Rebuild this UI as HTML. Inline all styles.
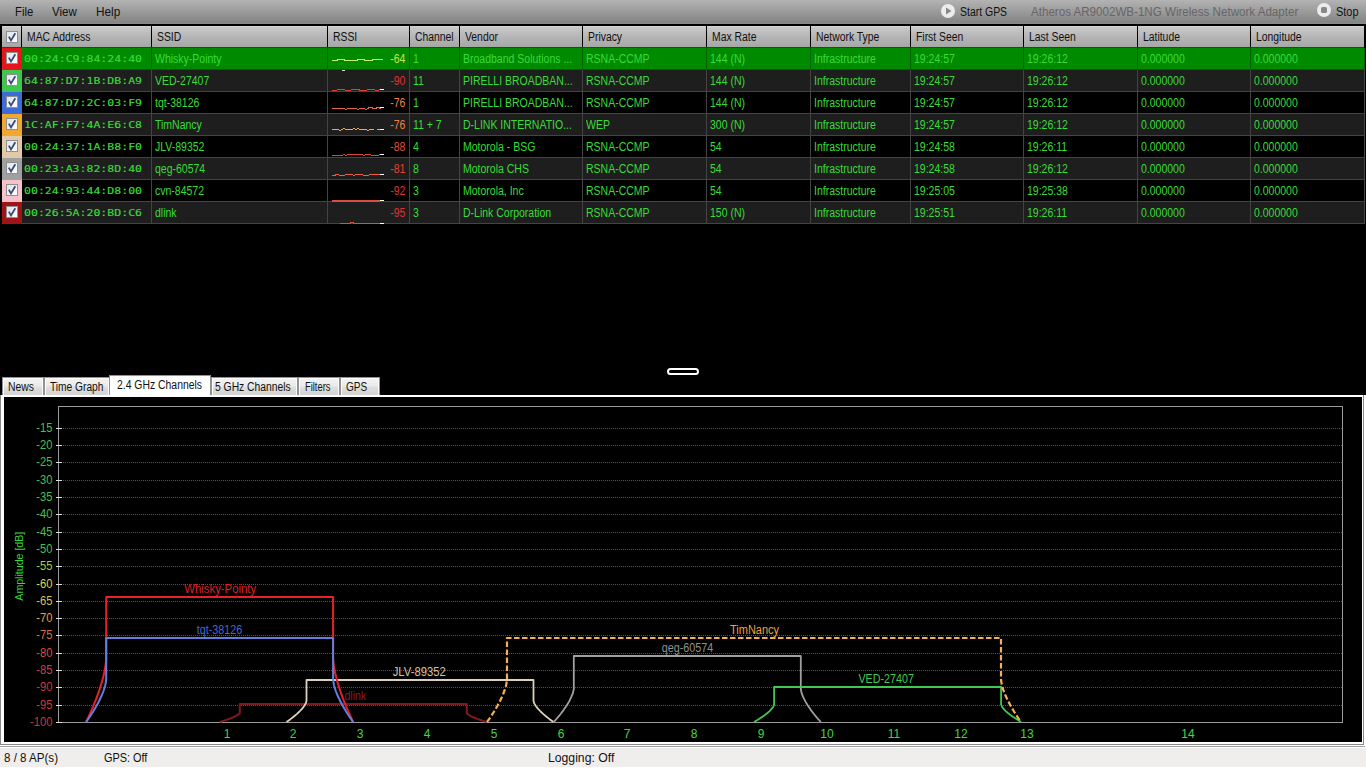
<!DOCTYPE html>
<html><head><meta charset="utf-8"><title>inSSIDer</title>
<style>
html,body{margin:0;padding:0;background:#000;}
body{width:1366px;height:768px;overflow:hidden;position:relative;font-family:"Liberation Sans",sans-serif;font-size:12px;}
.abs{position:absolute;}
#menubar{left:0;top:0;width:1366px;height:24px;background:linear-gradient(#b3b3b3,#868686 90%,#8b8b8b);}
#menubar span{position:absolute;top:5px;font-size:12.5px;color:#111;white-space:nowrap;transform-origin:0 50%;}
.hc{position:absolute;top:26px;height:21px;background:linear-gradient(#dcdcdc 0,#c9c9c9 1.5px,#b5b4b5 55%,#a5a8a5 100%);color:#111;line-height:23px;white-space:nowrap;overflow:hidden;}
.hc span{display:inline-block;margin-left:5px;transform:scaleX(.865);transform-origin:0 50%;}
.row{position:absolute;left:2px;width:1363px;height:22px;background:#444;}
.row.sel{background:#006400;}
.c{position:absolute;top:0;height:21px;line-height:23px;color:#38dc38;white-space:nowrap;overflow:hidden;}
.c span{display:inline-block;margin-left:3px;transform:scaleX(.875);transform-origin:0 50%;}
.mac span{font-family:"DejaVu Sans Mono","Liberation Mono",monospace;font-size:9.2px;transform:scaleX(1.255);margin-left:2px;position:relative;top:-1px;-webkit-text-stroke:.15px #38dc38;}
.cb{position:absolute;left:6px;top:5px;width:10px;height:10px;border:1px solid #8e8f8f;background:linear-gradient(135deg,#dfe3e8,#fff);}
.cb svg{position:absolute;left:0;top:0;}
.tab{position:absolute;top:377px;height:17px;line-height:18px;background:linear-gradient(#f3f3f3,#ebebeb 45%,#dedede 55%,#d4d4d4);border:1px solid #929292;border-bottom:none;box-shadow:inset 1px 1px 0 #fcfcfc,inset -1px 0 0 #fcfcfc;color:#111;text-align:center;white-space:nowrap;}
.tab span{position:absolute;top:0;transform-origin:0 50%;}
#status{left:0;top:747px;width:1366px;height:20px;background:#f0eded;color:#111;border-top:1px solid #fff;border-bottom:1px solid #fff;box-sizing:content-box;height:19px;}
#status span{position:absolute;top:3px;white-space:nowrap;transform-origin:0 50%;}
</style></head><body>

<div id="menubar" class="abs">
<span style="left:15px;color:#111;transform:scaleX(0.904)">File</span>
<span style="left:52px;color:#111;transform:scaleX(0.921)">View</span>
<span style="left:96.25px;color:#111;transform:scaleX(0.943)">Help</span>
<span style="left:959.7px;color:#111;transform:scaleX(0.837)">Start GPS</span>
<span style="left:1031.4px;color:#666;transform:scaleX(0.927)">Atheros AR9002WB-1NG Wireless Network Adapter</span>
<span style="left:1335.8px;color:#111;transform:scaleX(0.875)">Stop</span>
<svg class="abs" style="left:940px;top:3px" width="16" height="16"><circle cx="8" cy="8" r="7" fill="#ececec"/><path d="M6 4.5 L11.5 8 L6 11.5Z" fill="#888"/></svg>
<svg class="abs" style="left:1316px;top:2px" width="16" height="16"><circle cx="8" cy="8" r="7" fill="#ececec"/><rect x="5" y="5" width="6" height="6" rx="1.5" fill="#888"/></svg>
</div>
<div class="hc" style="left:2px;width:19px"><div class="cb" style="left:3.5px;top:4.5px"><svg width="10" height="10" viewBox="0 0 10 10"><path d="M1.8 4.6 L4 8.4 L8.3 1.2" fill="none" stroke="#3a4a78" stroke-width="1.8"/></svg></div></div>
<div class="hc" style="left:22px;width:129px"><span>MAC Address</span></div>
<div class="hc" style="left:152px;width:175px"><span>SSID</span></div>
<div class="hc" style="left:328px;width:81px"><span>RSSI</span></div>
<div class="hc" style="left:410px;width:49px"><span>Channel</span></div>
<div class="hc" style="left:460px;width:122px"><span>Vendor</span></div>
<div class="hc" style="left:583px;width:123px"><span>Privacy</span></div>
<div class="hc" style="left:707px;width:103px"><span>Max Rate</span></div>
<div class="hc" style="left:811px;width:99px"><span>Network Type</span></div>
<div class="hc" style="left:911px;width:112px"><span>First Seen</span></div>
<div class="hc" style="left:1024px;width:113px"><span>Last Seen</span></div>
<div class="hc" style="left:1138px;width:112px"><span>Latitude</span></div>
<div class="hc" style="left:1251px;width:113px"><span>Longitude</span></div>
<div class="row sel" style="top:48px">
<div class="abs" style="left:0;top:0;width:19.6px;height:22px;background:#e8141c"><div class="cb" style="left:3.5px;top:4.3px"><svg width="10" height="10" viewBox="0 0 10 10"><path d="M1.8 4.6 L4 8.4 L8.3 1.2" fill="none" stroke="#3a4a78" stroke-width="1.8"/></svg></div></div>
<div class="c mac" style="left:20px;width:129px;background:#008a00"><span>00:24:C9:84:24:40</span></div>
<div class="c" style="left:150px;width:175px;background:#008a00"><span>Whisky-Pointy</span></div>
<div class="c" style="left:326px;width:81px;background:#008a00;overflow:visible"><svg class="abs" style="left:0;top:0;overflow:visible" width="60" height="22"><path d="M4 12 L9 12 L10 11 L16 11 L17 12 L29 12 L30 11 L36 11 L37 12 L44 12 L45 11 L55 11" fill="none" stroke="#ccf060" stroke-width="1" transform="translate(0,.5)" shape-rendering="crispEdges"/></svg><span style="position:absolute;right:4px;top:0;margin:0;color:#c8e840;transform-origin:100% 50%">-64</span></div>
<div class="c" style="left:408px;width:49px;background:#008a00"><span>1</span></div>
<div class="c" style="left:458px;width:122px;background:#008a00"><span>Broadband Solutions ...</span></div>
<div class="c" style="left:581px;width:123px;background:#008a00"><span>RSNA-CCMP</span></div>
<div class="c" style="left:705px;width:103px;background:#008a00"><span>144 (N)</span></div>
<div class="c" style="left:809px;width:99px;background:#008a00"><span>Infrastructure</span></div>
<div class="c" style="left:909px;width:112px;background:#008a00"><span>19:24:57</span></div>
<div class="c" style="left:1022px;width:113px;background:#008a00"><span>19:26:12</span></div>
<div class="c" style="left:1136px;width:112px;background:#008a00"><span>0.000000</span></div>
<div class="c" style="left:1249px;width:113px;background:#008a00"><span>0.000000</span></div>
</div>
<div class="row" style="top:70px">
<div class="abs" style="left:0;top:0;width:19.6px;height:22px;background:#3cc84c"><div class="cb" style="left:3.5px;top:4.3px"><svg width="10" height="10" viewBox="0 0 10 10"><path d="M1.8 4.6 L4 8.4 L8.3 1.2" fill="none" stroke="#3a4a78" stroke-width="1.8"/></svg></div></div>
<div class="c mac" style="left:20px;width:129px;background:#1e1e1e"><span>64:87:D7:1B:DB:A9</span></div>
<div class="c" style="left:150px;width:175px;background:#1e1e1e"><span>VED-27407</span></div>
<div class="c" style="left:326px;width:81px;background:#1e1e1e;overflow:visible"><svg class="abs" style="left:0;top:0;overflow:visible" width="60" height="22"><path d="M4 20 L8 20 L10 19 L16 19 L18 20 L22 20 L24 19 L30 19 L33 20 L38 20 L40 19 L46 19 L48 20 L50 20 L52 19 L55 19" fill="none" stroke="#e04030" stroke-width="1" transform="translate(0,.5)" shape-rendering="crispEdges"/><rect x="52" y="19" width="4" height="1" fill="#fff"/><rect x="14" y="0" width="3" height="1" fill="#ddd"/></svg><span style="position:absolute;right:4px;top:0;margin:0;color:#e03030;transform-origin:100% 50%">-90</span></div>
<div class="c" style="left:408px;width:49px;background:#1e1e1e"><span>11</span></div>
<div class="c" style="left:458px;width:122px;background:#1e1e1e"><span>PIRELLI BROADBAN...</span></div>
<div class="c" style="left:581px;width:123px;background:#1e1e1e"><span>RSNA-CCMP</span></div>
<div class="c" style="left:705px;width:103px;background:#1e1e1e"><span>144 (N)</span></div>
<div class="c" style="left:809px;width:99px;background:#1e1e1e"><span>Infrastructure</span></div>
<div class="c" style="left:909px;width:112px;background:#1e1e1e"><span>19:24:57</span></div>
<div class="c" style="left:1022px;width:113px;background:#1e1e1e"><span>19:26:12</span></div>
<div class="c" style="left:1136px;width:112px;background:#1e1e1e"><span>0.000000</span></div>
<div class="c" style="left:1249px;width:113px;background:#1e1e1e"><span>0.000000</span></div>
</div>
<div class="row" style="top:92px">
<div class="abs" style="left:0;top:0;width:19.6px;height:22px;background:#3c6cd8"><div class="cb" style="left:3.5px;top:4.3px"><svg width="10" height="10" viewBox="0 0 10 10"><path d="M1.8 4.6 L4 8.4 L8.3 1.2" fill="none" stroke="#3a4a78" stroke-width="1.8"/></svg></div></div>
<div class="c mac" style="left:20px;width:129px;background:#000"><span>64:87:D7:2C:03:F9</span></div>
<div class="c" style="left:150px;width:175px;background:#000"><span>tqt-38126</span></div>
<div class="c" style="left:326px;width:81px;background:#000;overflow:visible"><svg class="abs" style="left:0;top:0;overflow:visible" width="60" height="22"><path d="M4 16 L16 16 L18 17 L20 16 L28 16 L30 17 L32 16 L36 16 L38 17 L40 16 L41 15 L44 15 L45 16 L48 16 L49 15 L51 15 L52 16 L53 15 L55 15" fill="none" stroke="#e86848" stroke-width="1" transform="translate(0,.5)" shape-rendering="crispEdges"/><rect x="52" y="15" width="4" height="1" fill="#fff"/></svg><span style="position:absolute;right:4px;top:0;margin:0;color:#f08040;transform-origin:100% 50%">-76</span></div>
<div class="c" style="left:408px;width:49px;background:#000"><span>1</span></div>
<div class="c" style="left:458px;width:122px;background:#000"><span>PIRELLI BROADBAN...</span></div>
<div class="c" style="left:581px;width:123px;background:#000"><span>RSNA-CCMP</span></div>
<div class="c" style="left:705px;width:103px;background:#000"><span>144 (N)</span></div>
<div class="c" style="left:809px;width:99px;background:#000"><span>Infrastructure</span></div>
<div class="c" style="left:909px;width:112px;background:#000"><span>19:24:57</span></div>
<div class="c" style="left:1022px;width:113px;background:#000"><span>19:26:12</span></div>
<div class="c" style="left:1136px;width:112px;background:#000"><span>0.000000</span></div>
<div class="c" style="left:1249px;width:113px;background:#000"><span>0.000000</span></div>
</div>
<div class="row" style="top:114px">
<div class="abs" style="left:0;top:0;width:19.6px;height:22px;background:#f0a830"><div class="cb" style="left:3.5px;top:4.3px"><svg width="10" height="10" viewBox="0 0 10 10"><path d="M1.8 4.6 L4 8.4 L8.3 1.2" fill="none" stroke="#3a4a78" stroke-width="1.8"/></svg></div></div>
<div class="c mac" style="left:20px;width:129px;background:#1e1e1e"><span>1C:AF:F7:4A:E6:C8</span></div>
<div class="c" style="left:150px;width:175px;background:#1e1e1e"><span>TimNancy</span></div>
<div class="c" style="left:326px;width:81px;background:#1e1e1e;overflow:visible"><svg class="abs" style="left:0;top:0;overflow:visible" width="60" height="22"><path d="M4 15 L10 15 L12 16 L14 15 L16 14 L18 15 L24 15 L26 14 L28 15 L30 14 L32 15 L38 15 L40 16 L42 15 L46 15 M49 15 L55 15" fill="none" stroke="#f0a850" stroke-width="1" transform="translate(0,.5)" shape-rendering="crispEdges"/><rect x="52" y="15" width="4" height="1" fill="#fff"/></svg><span style="position:absolute;right:4px;top:0;margin:0;color:#f08040;transform-origin:100% 50%">-76</span></div>
<div class="c" style="left:408px;width:49px;background:#1e1e1e"><span>11 + 7</span></div>
<div class="c" style="left:458px;width:122px;background:#1e1e1e"><span>D-LINK INTERNATIO...</span></div>
<div class="c" style="left:581px;width:123px;background:#1e1e1e"><span>WEP</span></div>
<div class="c" style="left:705px;width:103px;background:#1e1e1e"><span>300 (N)</span></div>
<div class="c" style="left:809px;width:99px;background:#1e1e1e"><span>Infrastructure</span></div>
<div class="c" style="left:909px;width:112px;background:#1e1e1e"><span>19:24:57</span></div>
<div class="c" style="left:1022px;width:113px;background:#1e1e1e"><span>19:26:12</span></div>
<div class="c" style="left:1136px;width:112px;background:#1e1e1e"><span>0.000000</span></div>
<div class="c" style="left:1249px;width:113px;background:#1e1e1e"><span>0.000000</span></div>
</div>
<div class="row" style="top:136px">
<div class="abs" style="left:0;top:0;width:19.6px;height:22px;background:#e0c8a8"><div class="cb" style="left:3.5px;top:4.3px"><svg width="10" height="10" viewBox="0 0 10 10"><path d="M1.8 4.6 L4 8.4 L8.3 1.2" fill="none" stroke="#3a4a78" stroke-width="1.8"/></svg></div></div>
<div class="c mac" style="left:20px;width:129px;background:#000"><span>00:24:37:1A:B8:F0</span></div>
<div class="c" style="left:150px;width:175px;background:#000"><span>JLV-89352</span></div>
<div class="c" style="left:326px;width:81px;background:#000;overflow:visible"><svg class="abs" style="left:0;top:0;overflow:visible" width="60" height="22"><path d="M4 19 L14 19 L16 18 L18 19 L20 18 L34 18 L36 19 L38 18 L42 18 L44 19 L50 19 L52 18 L55 18" fill="none" stroke="#e04830" stroke-width="1" transform="translate(0,.5)" shape-rendering="crispEdges"/><rect x="52" y="18" width="4" height="1" fill="#fff"/></svg><span style="position:absolute;right:4px;top:0;margin:0;color:#e05038;transform-origin:100% 50%">-88</span></div>
<div class="c" style="left:408px;width:49px;background:#000"><span>4</span></div>
<div class="c" style="left:458px;width:122px;background:#000"><span>Motorola - BSG</span></div>
<div class="c" style="left:581px;width:123px;background:#000"><span>RSNA-CCMP</span></div>
<div class="c" style="left:705px;width:103px;background:#000"><span>54</span></div>
<div class="c" style="left:809px;width:99px;background:#000"><span>Infrastructure</span></div>
<div class="c" style="left:909px;width:112px;background:#000"><span>19:24:58</span></div>
<div class="c" style="left:1022px;width:113px;background:#000"><span>19:26:11</span></div>
<div class="c" style="left:1136px;width:112px;background:#000"><span>0.000000</span></div>
<div class="c" style="left:1249px;width:113px;background:#000"><span>0.000000</span></div>
</div>
<div class="row" style="top:158px">
<div class="abs" style="left:0;top:0;width:19.6px;height:22px;background:#a0a0a0"><div class="cb" style="left:3.5px;top:4.3px"><svg width="10" height="10" viewBox="0 0 10 10"><path d="M1.8 4.6 L4 8.4 L8.3 1.2" fill="none" stroke="#3a4a78" stroke-width="1.8"/></svg></div></div>
<div class="c mac" style="left:20px;width:129px;background:#1e1e1e"><span>00:23:A3:82:8D:40</span></div>
<div class="c" style="left:150px;width:175px;background:#1e1e1e"><span>qeg-60574</span></div>
<div class="c" style="left:326px;width:81px;background:#1e1e1e;overflow:visible"><svg class="abs" style="left:0;top:0;overflow:visible" width="60" height="22"><path d="M4 17 L7 17 L8 16 L10 16 L12 17 L16 17 L18 16 L24 16 L26 17 L28 16 L34 16 L36 17 L40 17 L42 16 L46 16 L48 16 L55 16" fill="none" stroke="#e86040" stroke-width="1" transform="translate(0,.5)" shape-rendering="crispEdges"/><rect x="52" y="16" width="4" height="1" fill="#fff"/></svg><span style="position:absolute;right:4px;top:0;margin:0;color:#e84030;transform-origin:100% 50%">-81</span></div>
<div class="c" style="left:408px;width:49px;background:#1e1e1e"><span>8</span></div>
<div class="c" style="left:458px;width:122px;background:#1e1e1e"><span>Motorola CHS</span></div>
<div class="c" style="left:581px;width:123px;background:#1e1e1e"><span>RSNA-CCMP</span></div>
<div class="c" style="left:705px;width:103px;background:#1e1e1e"><span>54</span></div>
<div class="c" style="left:809px;width:99px;background:#1e1e1e"><span>Infrastructure</span></div>
<div class="c" style="left:909px;width:112px;background:#1e1e1e"><span>19:24:58</span></div>
<div class="c" style="left:1022px;width:113px;background:#1e1e1e"><span>19:26:12</span></div>
<div class="c" style="left:1136px;width:112px;background:#1e1e1e"><span>0.000000</span></div>
<div class="c" style="left:1249px;width:113px;background:#1e1e1e"><span>0.000000</span></div>
</div>
<div class="row" style="top:180px">
<div class="abs" style="left:0;top:0;width:19.6px;height:22px;background:#f8c0c8"><div class="cb" style="left:3.5px;top:4.3px"><svg width="10" height="10" viewBox="0 0 10 10"><path d="M1.8 4.6 L4 8.4 L8.3 1.2" fill="none" stroke="#3a4a78" stroke-width="1.8"/></svg></div></div>
<div class="c mac" style="left:20px;width:129px;background:#000"><span>00:24:93:44:D8:00</span></div>
<div class="c" style="left:150px;width:175px;background:#000"><span>cvn-84572</span></div>
<div class="c" style="left:326px;width:81px;background:#000;overflow:visible"><svg class="abs" style="left:0;top:0;overflow:visible" width="60" height="22"><path d="M4 20 L55 20 M4 21 L52 21" fill="none" stroke="#d85040" stroke-width="1" transform="translate(0,.5)" shape-rendering="crispEdges"/><rect x="52" y="20" width="4" height="1" fill="#fff"/></svg><span style="position:absolute;right:4px;top:0;margin:0;color:#e03030;transform-origin:100% 50%">-92</span></div>
<div class="c" style="left:408px;width:49px;background:#000"><span>3</span></div>
<div class="c" style="left:458px;width:122px;background:#000"><span>Motorola, Inc</span></div>
<div class="c" style="left:581px;width:123px;background:#000"><span>RSNA-CCMP</span></div>
<div class="c" style="left:705px;width:103px;background:#000"><span>54</span></div>
<div class="c" style="left:809px;width:99px;background:#000"><span>Infrastructure</span></div>
<div class="c" style="left:909px;width:112px;background:#000"><span>19:25:05</span></div>
<div class="c" style="left:1022px;width:113px;background:#000"><span>19:25:38</span></div>
<div class="c" style="left:1136px;width:112px;background:#000"><span>0.000000</span></div>
<div class="c" style="left:1249px;width:113px;background:#000"><span>0.000000</span></div>
</div>
<div class="row" style="top:202px">
<div class="abs" style="left:0;top:0;width:19.6px;height:22px;background:#a01418"><div class="cb" style="left:3.5px;top:4.3px"><svg width="10" height="10" viewBox="0 0 10 10"><path d="M1.8 4.6 L4 8.4 L8.3 1.2" fill="none" stroke="#3a4a78" stroke-width="1.8"/></svg></div></div>
<div class="c mac" style="left:20px;width:129px;background:#1e1e1e"><span>00:26:5A:20:BD:C6</span></div>
<div class="c" style="left:150px;width:175px;background:#1e1e1e"><span>dlink</span></div>
<div class="c" style="left:326px;width:81px;background:#1e1e1e;overflow:visible"><svg class="abs" style="left:0;top:0;overflow:visible" width="60" height="22"><path d="M12 21 L22 21 L23 20 L25 20 L26 21 L52 21" fill="none" stroke="#d85040" stroke-width="1" transform="translate(0,.5)" shape-rendering="crispEdges"/><rect x="52" y="21" width="4" height="1" fill="#fff"/></svg><span style="position:absolute;right:4px;top:0;margin:0;color:#e03030;transform-origin:100% 50%">-95</span></div>
<div class="c" style="left:408px;width:49px;background:#1e1e1e"><span>3</span></div>
<div class="c" style="left:458px;width:122px;background:#1e1e1e"><span>D-Link Corporation</span></div>
<div class="c" style="left:581px;width:123px;background:#1e1e1e"><span>RSNA-CCMP</span></div>
<div class="c" style="left:705px;width:103px;background:#1e1e1e"><span>150 (N)</span></div>
<div class="c" style="left:809px;width:99px;background:#1e1e1e"><span>Infrastructure</span></div>
<div class="c" style="left:909px;width:112px;background:#1e1e1e"><span>19:25:51</span></div>
<div class="c" style="left:1022px;width:113px;background:#1e1e1e"><span>19:26:11</span></div>
<div class="c" style="left:1136px;width:112px;background:#1e1e1e"><span>0.000000</span></div>
<div class="c" style="left:1249px;width:113px;background:#1e1e1e"><span>0.000000</span></div>
</div>
<div class="abs" style="left:2px;top:47px;width:1362px;height:1px;background:#1c4c1c"></div>
<div class="abs" style="left:667px;top:368px;width:28px;height:3px;border:2px solid #fff;border-radius:4px;background:#000"></div>
<div class="tab" style="left:2px;width:40px"><span style="left:5.4px;transform:scaleX(0.863)">News</span></div>
<div class="tab" style="left:44px;width:64px"><span style="left:5.4px;transform:scaleX(0.850)">Time Graph</span></div>
<div class="tab" style="left:109px;width:100px;top:375px;height:19px;background:#fff;line-height:18px;z-index:3"><span style="left:7.1px;transform:scaleX(0.867)">2.4 GHz Channels</span></div>
<div class="tab" style="left:211px;width:85px"><span style="left:3.3px;transform:scaleX(0.860)">5 GHz Channels</span></div>
<div class="tab" style="left:298px;width:40px"><span style="left:5.7px;transform:scaleX(0.778)">Filters</span></div>
<div class="tab" style="left:340px;width:38px"><span style="left:4.8px;transform:scaleX(0.836)">GPS</span></div>
<div class="abs" style="left:0;top:395px;width:1364px;height:350px;background:#8a8a8a"></div>
<div class="abs" style="left:1px;top:395px;width:1362px;height:349px;background:#fff"></div>
<div class="abs" style="left:4px;top:397px;width:1358px;height:345px;background:#000"></div>
<div class="abs" style="left:1364px;top:395px;width:2px;height:373px;background:#fff"></div>
<svg class="abs" style="left:0;top:396px" width="1366" height="350" viewBox="0 396 1366 350" font-family="Liberation Sans, sans-serif" font-size="12">
<rect x="58.5" y="406.5" width="1284.0" height="316.0" fill="none" stroke="#9a9a9a" stroke-width="1"/>
<line x1="63" y1="428.5" x2="1342.5" y2="428.5" stroke="#545454" stroke-width="1" stroke-dasharray="1 1"/>
<line x1="56" y1="428.5" x2="62" y2="428.5" stroke="#e0e0e0" stroke-width="1"/>
<text x="52.5" y="431.9" text-anchor="end" fill="#46c052" font-size="13" textLength="16.2" lengthAdjust="spacingAndGlyphs">-15</text>
<line x1="63" y1="445.5" x2="1342.5" y2="445.5" stroke="#545454" stroke-width="1" stroke-dasharray="1 1"/>
<line x1="56" y1="445.5" x2="62" y2="445.5" stroke="#e0e0e0" stroke-width="1"/>
<text x="52.5" y="448.9" text-anchor="end" fill="#46c052" font-size="13" textLength="16.2" lengthAdjust="spacingAndGlyphs">-20</text>
<line x1="63" y1="462.5" x2="1342.5" y2="462.5" stroke="#545454" stroke-width="1" stroke-dasharray="1 1"/>
<line x1="56" y1="462.5" x2="62" y2="462.5" stroke="#e0e0e0" stroke-width="1"/>
<text x="52.5" y="465.9" text-anchor="end" fill="#46c052" font-size="13" textLength="16.2" lengthAdjust="spacingAndGlyphs">-25</text>
<line x1="63" y1="480.5" x2="1342.5" y2="480.5" stroke="#545454" stroke-width="1" stroke-dasharray="1 1"/>
<line x1="56" y1="480.5" x2="62" y2="480.5" stroke="#e0e0e0" stroke-width="1"/>
<text x="52.5" y="483.9" text-anchor="end" fill="#46c052" font-size="13" textLength="16.2" lengthAdjust="spacingAndGlyphs">-30</text>
<line x1="63" y1="497.5" x2="1342.5" y2="497.5" stroke="#545454" stroke-width="1" stroke-dasharray="1 1"/>
<line x1="56" y1="497.5" x2="62" y2="497.5" stroke="#e0e0e0" stroke-width="1"/>
<text x="52.5" y="500.9" text-anchor="end" fill="#46c052" font-size="13" textLength="16.2" lengthAdjust="spacingAndGlyphs">-35</text>
<line x1="63" y1="514.5" x2="1342.5" y2="514.5" stroke="#545454" stroke-width="1" stroke-dasharray="1 1"/>
<line x1="56" y1="514.5" x2="62" y2="514.5" stroke="#e0e0e0" stroke-width="1"/>
<text x="52.5" y="517.9" text-anchor="end" fill="#46c052" font-size="13" textLength="16.2" lengthAdjust="spacingAndGlyphs">-40</text>
<line x1="63" y1="532.5" x2="1342.5" y2="532.5" stroke="#545454" stroke-width="1" stroke-dasharray="1 1"/>
<line x1="56" y1="532.5" x2="62" y2="532.5" stroke="#e0e0e0" stroke-width="1"/>
<text x="52.5" y="535.9" text-anchor="end" fill="#46c052" font-size="13" textLength="16.2" lengthAdjust="spacingAndGlyphs">-45</text>
<line x1="63" y1="549.5" x2="1342.5" y2="549.5" stroke="#545454" stroke-width="1" stroke-dasharray="1 1"/>
<line x1="56" y1="549.5" x2="62" y2="549.5" stroke="#e0e0e0" stroke-width="1"/>
<text x="52.5" y="552.9" text-anchor="end" fill="#46c052" font-size="13" textLength="16.2" lengthAdjust="spacingAndGlyphs">-50</text>
<line x1="63" y1="566.5" x2="1342.5" y2="566.5" stroke="#545454" stroke-width="1" stroke-dasharray="1 1"/>
<line x1="56" y1="566.5" x2="62" y2="566.5" stroke="#e0e0e0" stroke-width="1"/>
<text x="52.5" y="569.9" text-anchor="end" fill="#a4cc48" font-size="13" textLength="16.2" lengthAdjust="spacingAndGlyphs">-55</text>
<line x1="63" y1="584.5" x2="1342.5" y2="584.5" stroke="#545454" stroke-width="1" stroke-dasharray="1 1"/>
<line x1="56" y1="584.5" x2="62" y2="584.5" stroke="#e0e0e0" stroke-width="1"/>
<text x="52.5" y="587.9" text-anchor="end" fill="#dcd848" font-size="13" textLength="16.2" lengthAdjust="spacingAndGlyphs">-60</text>
<line x1="63" y1="601.5" x2="1342.5" y2="601.5" stroke="#545454" stroke-width="1" stroke-dasharray="1 1"/>
<line x1="56" y1="601.5" x2="62" y2="601.5" stroke="#e0e0e0" stroke-width="1"/>
<text x="52.5" y="604.9" text-anchor="end" fill="#dcc050" font-size="13" textLength="16.2" lengthAdjust="spacingAndGlyphs">-65</text>
<line x1="63" y1="618.5" x2="1342.5" y2="618.5" stroke="#545454" stroke-width="1" stroke-dasharray="1 1"/>
<line x1="56" y1="618.5" x2="62" y2="618.5" stroke="#e0e0e0" stroke-width="1"/>
<text x="52.5" y="621.9" text-anchor="end" fill="#e0a048" font-size="13" textLength="16.2" lengthAdjust="spacingAndGlyphs">-70</text>
<line x1="63" y1="635.5" x2="1342.5" y2="635.5" stroke="#545454" stroke-width="1" stroke-dasharray="1 1"/>
<line x1="56" y1="635.5" x2="62" y2="635.5" stroke="#e0e0e0" stroke-width="1"/>
<text x="52.5" y="638.9" text-anchor="end" fill="#dc7048" font-size="13" textLength="16.2" lengthAdjust="spacingAndGlyphs">-75</text>
<line x1="63" y1="653.5" x2="1342.5" y2="653.5" stroke="#545454" stroke-width="1" stroke-dasharray="1 1"/>
<line x1="56" y1="653.5" x2="62" y2="653.5" stroke="#e0e0e0" stroke-width="1"/>
<text x="52.5" y="656.9" text-anchor="end" fill="#d85040" font-size="13" textLength="16.2" lengthAdjust="spacingAndGlyphs">-80</text>
<line x1="63" y1="670.5" x2="1342.5" y2="670.5" stroke="#545454" stroke-width="1" stroke-dasharray="1 1"/>
<line x1="56" y1="670.5" x2="62" y2="670.5" stroke="#e0e0e0" stroke-width="1"/>
<text x="52.5" y="673.9" text-anchor="end" fill="#d04040" font-size="13" textLength="16.2" lengthAdjust="spacingAndGlyphs">-85</text>
<line x1="63" y1="687.5" x2="1342.5" y2="687.5" stroke="#545454" stroke-width="1" stroke-dasharray="1 1"/>
<line x1="56" y1="687.5" x2="62" y2="687.5" stroke="#e0e0e0" stroke-width="1"/>
<text x="52.5" y="690.9" text-anchor="end" fill="#d03838" font-size="13" textLength="16.2" lengthAdjust="spacingAndGlyphs">-90</text>
<line x1="63" y1="705.5" x2="1342.5" y2="705.5" stroke="#545454" stroke-width="1" stroke-dasharray="1 1"/>
<line x1="56" y1="705.5" x2="62" y2="705.5" stroke="#e0e0e0" stroke-width="1"/>
<text x="52.5" y="708.9" text-anchor="end" fill="#d03838" font-size="13" textLength="16.2" lengthAdjust="spacingAndGlyphs">-95</text>
<line x1="56" y1="722.5" x2="62" y2="722.5" stroke="#e0e0e0" stroke-width="1"/>
<text x="52.5" y="725.9" text-anchor="end" fill="#d03838" font-size="13" textLength="22.4" lengthAdjust="spacingAndGlyphs">-100</text>
<text transform="translate(22.5 566.2) rotate(-90)" text-anchor="middle" fill="#38d838" font-size="11.5" textLength="69" lengthAdjust="spacingAndGlyphs">Amplitude [dB]</text>
<text x="227" y="738" text-anchor="middle" fill="#40d840">1</text>
<text x="293" y="738" text-anchor="middle" fill="#40d840">2</text>
<text x="360" y="738" text-anchor="middle" fill="#40d840">3</text>
<text x="427" y="738" text-anchor="middle" fill="#40d840">4</text>
<text x="494" y="738" text-anchor="middle" fill="#40d840">5</text>
<text x="561" y="738" text-anchor="middle" fill="#40d840">6</text>
<text x="627" y="738" text-anchor="middle" fill="#40d840">7</text>
<text x="694" y="738" text-anchor="middle" fill="#40d840">8</text>
<text x="761" y="738" text-anchor="middle" fill="#40d840">9</text>
<text x="827" y="738" text-anchor="middle" fill="#40d840">10</text>
<text x="894" y="738" text-anchor="middle" fill="#40d840">11</text>
<text x="961" y="738" text-anchor="middle" fill="#40d840">12</text>
<text x="1027" y="738" text-anchor="middle" fill="#40d840">13</text>
<text x="1188" y="738" text-anchor="middle" fill="#40d840">14</text>
<path d="M219.8 722.0 L223.4 720.9 L226.8 719.8 L229.9 718.6 L232.7 717.5 L235.2 716.4 L237.2 715.2 L238.9 714.1 L239.8 713.0 L239.8 704.0 L466.8 704.0 L466.8 713.0 L467.6 714.1 L469.2 715.2 L471.3 716.4 L473.8 717.5 L476.6 718.6 L479.7 719.8 L483.1 720.9 L486.8 722.0" fill="none" stroke="#801820" stroke-width="2" stroke-linejoin="round"/>
<path d="M286.5 722.0 L290.2 719.4 L293.6 716.8 L296.7 714.1 L299.5 711.5 L302.0 708.9 L304.0 706.2 L305.7 703.6 L306.5 701.0 L306.5 680.0 L533.5 680.0 L533.5 701.0 L534.4 703.6 L536.0 706.2 L538.1 708.9 L540.6 711.5 L543.4 714.1 L546.5 716.8 L549.9 719.4 L553.5 722.0" fill="none" stroke="#dcd0bc" stroke-width="1.8" stroke-linejoin="round"/>
<path d="M553.8 722.0 L557.4 717.9 L560.8 713.8 L563.9 709.6 L566.7 705.5 L569.2 701.4 L571.2 697.2 L572.9 693.1 L573.8 689.0 L573.8 656.0 L800.8 656.0 L800.8 689.0 L801.6 693.1 L803.2 697.2 L805.3 701.4 L807.8 705.5 L810.6 709.6 L813.7 713.8 L817.1 717.9 L820.8 722.0" fill="none" stroke="#a0a0a0" stroke-width="1.8" stroke-linejoin="round"/>
<path d="M754.1 722.0 L757.8 719.8 L761.2 717.6 L764.3 715.4 L767.1 713.2 L769.6 711.1 L771.6 708.9 L773.3 706.7 L774.1 704.5 L774.1 687.0 L1001.1 687.0 L1001.1 704.5 L1002.0 706.7 L1003.6 708.9 L1005.7 711.1 L1008.2 713.2 L1011.0 715.4 L1014.1 717.6 L1017.5 719.8 L1021.1 722.0" fill="none" stroke="#40c850" stroke-width="1.8" stroke-linejoin="round"/>
<path d="M487.0 722.0 L490.7 716.8 L494.1 711.5 L497.2 706.2 L500.0 701.0 L502.5 695.8 L504.5 690.5 L506.2 685.2 L507.0 680.0 L507.0 638.0 L1001.0 638.0 L1001.0 680.0 L1001.9 685.2 L1003.5 690.5 L1005.6 695.8 L1008.1 701.0 L1010.9 706.2 L1014.0 711.5 L1017.4 716.8 L1021.0 722.0" fill="none" stroke="#f4b058" stroke-width="2.2" stroke-linejoin="round" stroke-dasharray="5.5 2.5"/>
<path d="M86.2 722.0 L89.8 714.2 L93.2 706.4 L96.3 698.6 L99.1 690.8 L101.6 682.9 L103.7 675.1 L105.3 667.3 L106.2 659.5 L106.2 597.0 L333.1 597.0 L333.1 659.5 L334.0 667.3 L335.6 675.1 L337.7 682.9 L340.2 690.8 L343.0 698.6 L346.1 706.4 L349.5 714.2 L353.1 722.0" fill="none" stroke="#e82028" stroke-width="2" stroke-linejoin="round"/>
<path d="M86.2 722.0 L89.8 716.8 L93.2 711.5 L96.3 706.2 L99.1 701.0 L101.6 695.8 L103.7 690.5 L105.3 685.2 L106.2 680.0 L106.2 638.0 L333.1 638.0 L333.1 680.0 L334.0 685.2 L335.6 690.5 L337.7 695.8 L340.2 701.0 L343.0 706.2 L346.1 711.5 L349.5 716.8 L353.1 722.0" fill="none" stroke="#6080e0" stroke-width="2" stroke-linejoin="round"/>
<text x="220.2" y="593" text-anchor="middle" fill="#d82028" textLength="71.7" lengthAdjust="spacingAndGlyphs">Whisky-Pointy</text>
<text x="219.5" y="634" text-anchor="middle" fill="#4868d0" textLength="45.6" lengthAdjust="spacingAndGlyphs">tqt-38126</text>
<text x="419.2" y="676" text-anchor="middle" fill="#d8c0a0" textLength="53" lengthAdjust="spacingAndGlyphs">JLV-89352</text>
<text x="355.3" y="700" text-anchor="middle" fill="#8c1c20" textLength="21.6" lengthAdjust="spacingAndGlyphs">dlink</text>
<text x="754.5" y="634" text-anchor="middle" fill="#f0a040" textLength="49" lengthAdjust="spacingAndGlyphs">TimNancy</text>
<text x="687.5" y="652" text-anchor="middle" fill="#909090" textLength="51.6" lengthAdjust="spacingAndGlyphs">qeg-60574</text>
<text x="886.2" y="683" text-anchor="middle" fill="#40c850" textLength="55.6" lengthAdjust="spacingAndGlyphs">VED-27407</text>
</svg>
<div class="abs" style="left:0;top:745px;width:1366px;height:1px;background:#fff"></div>
<div class="abs" style="left:0;top:746px;width:1365px;height:1px;background:#a0a0a0"></div>
<div id="status" class="abs">
<span style="left:3.5px;transform:scaleX(0.964)">8 / 8 AP(s)</span>
<span style="left:104.3px;transform:scaleX(0.908)">GPS: Off</span>
<span style="left:547.7px;transform:scaleX(1.017)">Logging: Off</span>
</div>
</body></html>
